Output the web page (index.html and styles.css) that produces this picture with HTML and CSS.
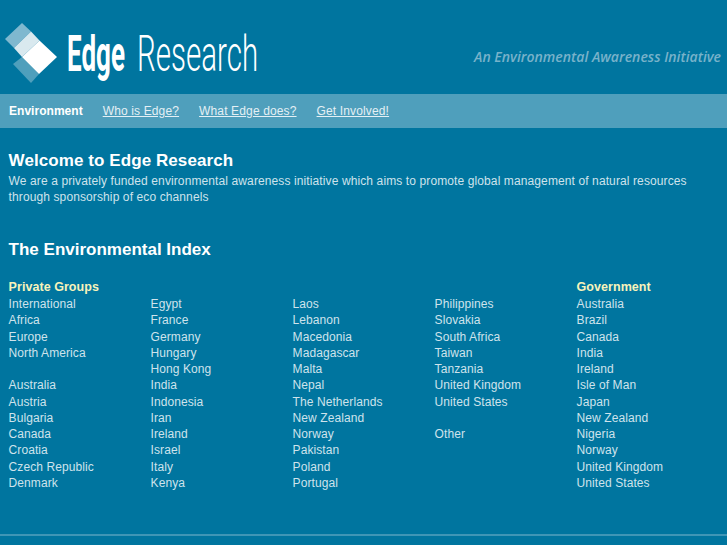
FILE: index.html
```html
<!DOCTYPE html>
<html lang="en">
<head>
<meta charset="utf-8">
<title>Edge Research</title>
<link rel="stylesheet" href="styles.css">
</head>
<body>
<header class="masthead">
  <svg class="mark" width="65" height="75" viewBox="0 15 65 75" aria-hidden="true">
    <polygon points="13,64 22,57 39,74 31,83" fill="#4f9fbc"/>
    <polygon points="5,39 22,23 31,31.5 14,48" fill="#7fb8cf"/>
    <polygon points="14,48 31,31.5 39.5,40.5 22,57" fill="#d9e9ef"/>
    <polygon points="22,57 39.5,40.5 57,57 39,74" fill="#ffffff"/>
  </svg>
  <div class="wordmark"><span class="w-bold">Edge</span><span class="w-thin">Research</span></div>
  <div class="tagline">An Environmental Awareness Initiative</div>
</header>
<nav class="nav">
  <span class="current">Environment</span>
  <a href="#">Who is Edge?</a>
  <a href="#">What Edge does?</a>
  <a href="#">Get Involved!</a>
</nav>
<main class="content">
  <h1>Welcome to Edge Research</h1>
  <p class="intro">We are a privately funded environmental awareness initiative which aims to promote global management of natural resources through sponsorship of eco channels</p>
  <h2>The Environmental Index</h2>
  <div class="index">
    <ul>
      <li class="head">Private Groups</li>
      <li>International</li><li>Africa</li><li>Europe</li><li>North America</li><li>&nbsp;</li>
      <li>Australia</li><li>Austria</li><li>Bulgaria</li><li>Canada</li><li>Croatia</li><li>Czech Republic</li><li>Denmark</li>
    </ul>
    <ul>
      <li class="head">&nbsp;</li>
      <li>Egypt</li><li>France</li><li>Germany</li><li>Hungary</li><li>Hong Kong</li>
      <li>India</li><li>Indonesia</li><li>Iran</li><li>Ireland</li><li>Israel</li><li>Italy</li><li>Kenya</li>
    </ul>
    <ul>
      <li class="head">&nbsp;</li>
      <li>Laos</li><li>Lebanon</li><li>Macedonia</li><li>Madagascar</li><li>Malta</li>
      <li>Nepal</li><li>The Netherlands</li><li>New Zealand</li><li>Norway</li><li>Pakistan</li><li>Poland</li><li>Portugal</li>
    </ul>
    <ul>
      <li class="head">&nbsp;</li>
      <li>Philippines</li><li>Slovakia</li><li>South Africa</li><li>Taiwan</li><li>Tanzania</li>
      <li>United Kingdom</li><li>United States</li><li>&nbsp;</li><li>Other</li>
    </ul>
    <ul>
      <li class="head">Government</li>
      <li>Australia</li><li>Brazil</li><li>Canada</li><li>India</li><li>Ireland</li>
      <li>Isle of Man</li><li>Japan</li><li>New Zealand</li><li>Nigeria</li><li>Norway</li><li>United Kingdom</li><li>United States</li>
    </ul>
  </div>
</main>
<footer class="footer"></footer>
</body>
</html>
```
FILE: styles.css
```css
html, body { margin: 0; padding: 0; }
body {
  background: #00759f;
  color: #cfe3ec;
  font-family: "Liberation Sans", Arial, sans-serif;
  font-size: 12px;
  height: 545px;
  overflow: hidden;
  letter-spacing: 0.08px;
}
.masthead {
  position: relative;
  height: 94px;
}
.mark { position: absolute; left: 0; top: 15px; }
.wordmark {
  position: absolute;
  left: 67px;
  top: 24px;
  width: 200px;
  height: 60px;
  color: #fff;
  font-family: "Roboto", sans-serif;
  font-size: 50px;
  line-height: 60px;
  letter-spacing: 0;
  white-space: nowrap;
}
.w-bold {
  position: absolute;
  left: 0;
  top: 0;
  font-weight: 700;
  transform: scaleX(0.52);
  transform-origin: left top;
}
.w-thin {
  position: absolute;
  left: 70px;
  top: 0;
  font-weight: 300;
  transform: scaleX(0.59);
  transform-origin: left top;
}
.tagline {
  position: absolute;
  right: 6px;
  top: 48px;
  color: #78b2ca;
  font-family: "Open Sans", sans-serif;
  font-style: italic;
  font-weight: 600;
  font-size: 14.05px;
  line-height: 18px;
  letter-spacing: 0;
}
.nav {
  height: 34px;
  background: #4f9fbc;
  display: flex;
  align-items: center;
  padding: 0 9px;
  gap: 20px;
  letter-spacing: 0.14px;
}
.nav a { color: #e4f0f5; }
.current { color: #fff; font-weight: 700; letter-spacing: 0.03px; }
.content { padding: 0 8.6px; }
h1, h2 {
  margin: 0;
  color: #fff;
  font-size: 17px;
  font-weight: 700;
  letter-spacing: 0.08px;
}
h1 { padding-top: 22px; line-height: 21px; }
.intro { margin: 2px 0 0; line-height: 16.3px; letter-spacing: 0.11px; }
h2 { margin-top: 33px; line-height: 21px; letter-spacing: 0; }
.index {
  display: grid;
  grid-template-columns: repeat(5, 142px);
  margin-top: 18px;
}
.index ul { list-style: none; margin: 0; padding: 0; }
.index li { line-height: 16.25px; white-space: nowrap; }
.index li.head { color: #f7f3bb; font-weight: 700; font-size: 12.5px; line-height: 18.5px; letter-spacing: 0.05px; }
.footer {
  position: absolute;
  left: 0; right: 0; top: 534px;
  height: 2px;
  background: #3f96b6;
}
```
